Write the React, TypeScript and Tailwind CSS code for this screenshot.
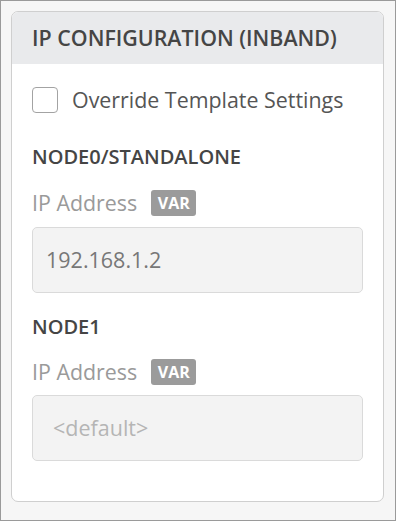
import React from "react";

function Var() {
  return (
    <span className="ml-[14px] inline-flex h-[26px] w-[45px] items-center justify-center rounded-[3px] bg-[#9b9b9b] text-[16px] font-bold text-white">
      VAR
    </span>
  );
}

function Field({ value, placeholder }: { value?: string; placeholder?: string }) {
  return (
    <div className="flex h-[66px] items-center rounded-[5px] border border-[#dadada] bg-[#f3f3f3] pl-[13px]">
      {value ? (
        <span className="text-[21.5px] text-[#777777]">{value}</span>
      ) : (
        <span className="pl-[7px] text-[21.5px] text-[#b5b5b5]">{placeholder}</span>
      )}
    </div>
  );
}

export default function App() {
  return (
    <div
      className="h-[521px] w-[396px] border border-[#9a9a9a] bg-[#f6f6f6] pl-[10px] pt-[10px]"
      style={{ fontFamily: '"Open Sans", sans-serif' }}
    >
      <div className="h-[491px] w-[373px] overflow-hidden rounded-[7px] border border-[#cfcfcf] bg-white">
        <div className="flex h-[52px] items-center bg-[#e9eaec] pl-[20px] text-[21.4px] font-semibold text-[#454545]">
          IP CONFIGURATION (INBAND)
        </div>
        <div className="px-[20px]">
          <div className="mt-[23px] flex h-[26px] items-center">
            <div className="h-[26px] w-[26px] rounded-[4px] border border-[#a3a3a3] bg-white" />
            <span className="ml-[14px] text-[21.4px] text-[#555555]">Override Template Settings</span>
          </div>
          <div className="mt-[32px] text-[20px] font-semibold leading-[24px] text-[#454545]">NODE0/STANDALONE</div>
          <div className="mt-[21px] flex h-[26px] items-center">
            <span className="text-[21.4px] text-[#9a9a9a]">IP Address</span>
            <Var />
          </div>
          <div className="mt-[11px]">
            <Field value="192.168.1.2" />
          </div>
          <div className="mt-[22px] text-[20px] font-semibold leading-[24px] text-[#454545]">NODE1</div>
          <div className="mt-[20px] flex h-[26px] items-center">
            <span className="text-[21.4px] text-[#9a9a9a]">IP Address</span>
            <Var />
          </div>
          <div className="mt-[10px]">
            <Field placeholder="<default>" />
          </div>
        </div>
      </div>
    </div>
  );
}
